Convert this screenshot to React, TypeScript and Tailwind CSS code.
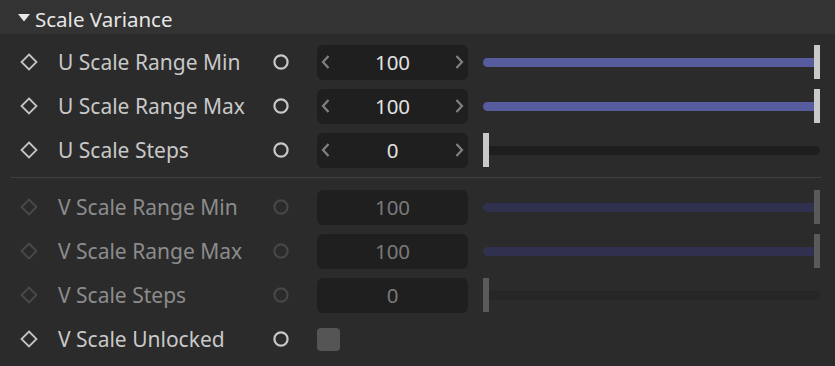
import React from "react";

const Diamond = ({ color }: { color: string }) => (
  <svg width="18" height="18" viewBox="0 0 18 18">
    <polygon points="9,1.5 16.5,9 9,16.5 1.5,9" fill="none" stroke={color} strokeWidth="1.8" />
  </svg>
);

const Ring = ({ color }: { color: string }) => (
  <svg width="16" height="16" viewBox="0 0 16 16">
    <circle cx="8" cy="8" r="6.6" fill="none" stroke={color} strokeWidth="2.2" />
  </svg>
);

const ChevL = () => (
  <svg width="11" height="16" viewBox="0 0 11 16">
    <polyline points="8.5,2 3,8 8.5,14" fill="none" stroke="#808080" strokeWidth="2.2" />
  </svg>
);
const ChevR = () => (
  <svg width="11" height="16" viewBox="0 0 11 16">
    <polyline points="2.5,2 8,8 2.5,14" fill="none" stroke="#808080" strokeWidth="2.2" />
  </svg>
);

type RowProps = {
  label: string;
  value: string;
  full: boolean;
  enabled: boolean;
};

const Row = ({ label, value, full, enabled }: RowProps) => (
  <div className="flex items-center h-[44px]">
    <div className="w-[57px] flex justify-center">
      <Diamond color={enabled ? "#c4c4c4" : "#4a4a4a"} />
    </div>
    <div
      className={`w-[216px] pl-[1px] text-[21px] leading-none ${enabled ? "text-[#c8c8c8]" : "text-[#8c8c8c]"}`}
    >
      {label}
    </div>
    <div className="w-[16px] flex">
      <Ring color={enabled ? "#c8c8c8" : "#474747"} />
    </div>
    <div className="ml-[28px] w-[151px] h-[35px] rounded-[6px] bg-[#1f1f1f] flex items-center justify-between px-[1px]">
      <div className="w-[13px] flex justify-end">{enabled ? <ChevL /> : null}</div>
      <div className={`text-[20.5px] leading-none ${enabled ? "text-[#e2e2e2]" : "text-[#7a7a7a]"}`}>{value}</div>
      <div className="w-[13px] flex justify-start">{enabled ? <ChevR /> : null}</div>
    </div>
    <div className="ml-[15px] w-[337px] relative h-[35px] flex items-center">
      <div
        className={`w-full h-[9px] rounded-full ${
          full ? (enabled ? "bg-[#575c9e]" : "bg-[#30314f]") : enabled ? "bg-[#1e1e1e]" : "bg-[#262626]"
        }`}
      />
      <div
        className={`absolute top-0 w-[6px] h-[34px] ${enabled ? "bg-[#c9c9c9]" : "bg-[#5a5a5a]"} ${
          full ? "right-0" : "left-0"
        }`}
      />
    </div>
  </div>
);

export default function App() {
  return (
    <div
      className="w-[835px] h-[366px] bg-[#2b2b2b] overflow-hidden"
      style={{ fontFamily: '"Noto Sans", "Open Sans", sans-serif' }}
    >
      <div className="h-[34px] pt-[4px] bg-[#333333] flex items-center">
        <svg width="12" height="8" viewBox="0 0 12 8" className="ml-[18px] mt-[-3px]">
          <polygon points="0,0 12,0 6,7.5" fill="#e8e8e8" />
        </svg>
        <span className="ml-[5px] text-[20.5px] leading-none text-[#e6e6e6]">Scale Variance</span>
      </div>
      <div className="pt-[6px]">
        <Row label="U Scale Range Min" value="100" full enabled />
        <Row label="U Scale Range Max" value="100" full enabled />
        <Row label="U Scale Steps" value="0" full={false} enabled />
      </div>
      <div className="mt-[5px] ml-[11px] mr-[14px] h-[1px] bg-[#404040]" />
      <div className="pt-[7px]">
        <Row label="V Scale Range Min" value="100" full enabled={false} />
        <Row label="V Scale Range Max" value="100" full enabled={false} />
        <Row label="V Scale Steps" value="0" full={false} enabled={false} />
        <div className="flex items-center h-[44px]">
          <div className="w-[57px] flex justify-center">
            <Diamond color="#c4c4c4" />
          </div>
          <div className="w-[216px] pl-[1px] text-[21px] leading-none text-[#c8c8c8]">V Scale Unlocked</div>
          <div className="w-[16px] flex">
            <Ring color="#c8c8c8" />
          </div>
          <div className="ml-[28px] w-[23px] h-[23px] rounded-[4px] bg-[#555555]" />
        </div>
      </div>
    </div>
  );
}
